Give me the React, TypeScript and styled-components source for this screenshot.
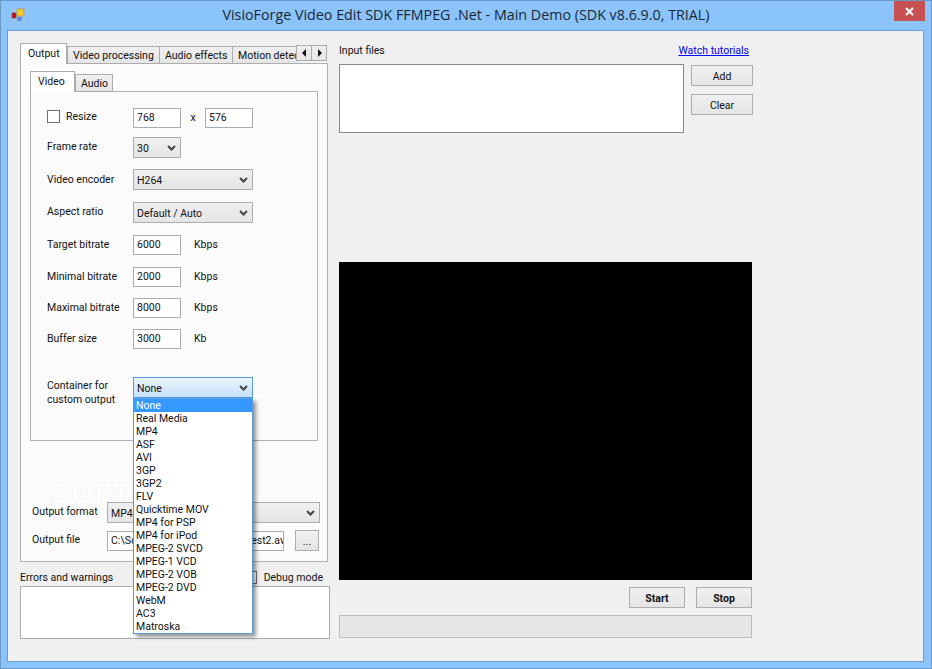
import React from 'react';
import styled, { createGlobalStyle } from 'styled-components';

const Global = createGlobalStyle`
  html, body { margin: 0; padding: 0; background: #8ac4fa; overflow: hidden; }
  * { box-sizing: border-box; }
`;

const Window = styled.div`
  width: 932px; height: 669px; background: #8ac4fa; border: 1px solid #6d98c6;
  display: flex; flex-direction: column; overflow: hidden;
  font: 10.5px Roboto, "Liberation Sans", sans-serif; color: #111;
`;
const TitleBar = styled.div`
  height: 29px; flex: none; display: grid; grid-template-columns: 1fr auto 1fr; align-items: start;
`;
const AppIcon = styled.svg` display: block; margin: 7px 0 0 10px; `;
const Title = styled.div`
  font: 14.3px "Open Sans", sans-serif; color: #1c2733; line-height: 28px; white-space: nowrap;
`;
const CloseButton = styled.div`
  justify-self: end; width: 31px; height: 20px; margin-right: 6px; background: #c75050;
  display: flex; align-items: center; justify-content: center;
`;
const Client = styled.div`
  margin: 0 7px 0 6px; height: 632px; flex: none; background: #f0f0f0; border: 1px solid #6b9ccf;
  padding: 12px 0 0 12px; display: flex; gap: 9px; align-items: flex-start;
`;
const LeftColumn = styled.div` width: 310px; flex: none; display: flex; flex-direction: column; `;
const RightColumn = styled.div` width: 414px; flex: none; display: flex; flex-direction: column; `;

const TabStrip = styled.div<{ $h: number }>`
  display: flex; align-items: flex-end; height: ${p => p.$h}px; position: relative; z-index: 2; flex: none;
`;
const TabsClip = styled.div` display: flex; align-items: flex-end; height: 100%; width: 277px; overflow: hidden; flex: none; `;
const Tab = styled.div<{ $w: number; $active?: boolean; $h?: number }>`
  width: ${p => p.$w}px; flex: none; height: ${p => p.$h ?? 18}px; white-space: nowrap; overflow: hidden;
  border: 1px solid #acacac; margin-right: -1px;
  background: ${p => (p.$active ? '#fff' : 'linear-gradient(#f0f0f0, #e5e5e5)')};
  ${p => (p.$active ? 'border-bottom: none; position: relative; z-index: 1; margin-right: 0;' : '')}
  padding: ${p => (p.$active ? '2px 0 0 7px' : '1px 0 0 5px')};
  line-height: 15px;
`;
const Scroller = styled.div`
  display: flex; align-self: flex-start; margin-top: 2px; margin-left: -1px; flex: none;
`;
const ScrollButton = styled.div`
  width: 16px; height: 16px; margin-right: -1px; border: 1px solid #acacac;
  background: linear-gradient(#f0f0f0, #e5e5e5); display: flex; align-items: center; justify-content: center;
`;
const OuterPanel = styled.div`
  width: 308px; height: 499px; margin-top: -1px; background: #fbfbfb; border: 1px solid #b0b0b0;
  padding: 7px 0 0 9px; position: relative; flex: none;
`;
const InnerPanel = styled.div`
  width: 288px; height: 350px; margin-top: -1px; background: #fbfbfb; border: 1px solid #b0b0b0;
  padding: 15px 0 0 16px; position: relative;
`;
const Row = styled.div<{ $top?: number }>`
  display: flex; align-items: center; height: 21px; margin-top: ${p => p.$top ?? 0}px;
`;
const RowLabel = styled.div<{ $pb?: number }>`
  width: 86px; flex: none; padding-bottom: ${p => p.$pb ?? 1}px; white-space: nowrap;
`;
const ContainerLabel = styled.div`
  width: 86px; flex: none; line-height: 14px; padding-top: 10px; white-space: nowrap;
`;
const CheckLabel = styled.div`
  width: 86px; flex: none; padding-bottom: 2px; display: flex; align-items: center; gap: 6px;
`;
const Check = styled.span`
  width: 13px; height: 13px; flex: none; display: block; background: #fff; border: 1px solid #6f6f6f;
`;
const Field = styled.div<{ $w: number }>`
  width: ${p => p.$w}px; height: 20px; flex: none; background: #fff; border: 1px solid #ababab;
  padding-left: 3px; line-height: 17px; white-space: nowrap; overflow: hidden;
`;
const Unit = styled.span` margin-left: 13px; padding-bottom: 1px; `;
const Times = styled.span` width: 24px; text-align: center; `;
const Combo = styled.div<{ $w: number; $focus?: boolean }>`
  width: ${p => p.$w}px; height: 21px; flex: none; position: relative;
  border: 1px solid ${p => (p.$focus ? '#569de5' : '#acacac')};
  background: ${p => (p.$focus ? 'linear-gradient(#ebf4fc, #c4e0fa)' : 'linear-gradient(#f0f0f0, #e5e5e5)')};
  padding: 1px 0 0 3px; line-height: 19px; display: flex; justify-content: space-between; align-items: center;
`;
const Chevron = styled.svg` margin-right: 4px; flex: none; `;
const DropList = styled.div`
  position: absolute; top: 20px; left: -1px; width: 120px; height: 236px; background: #fff;
  border: 1px solid #5b9bd8; box-shadow: 3px 3px 4px rgba(0,0,0,.42); z-index: 5;
`;
const DropItem = styled.div<{ $selected?: boolean }>`
  height: 13px; line-height: 13px; padding-left: 2px; white-space: nowrap;
  background: ${p => (p.$selected ? '#3399ff' : 'transparent')};
  color: ${p => (p.$selected ? '#fff' : '#111')};
`;
const OutputRows = styled.div` margin: 61px 0 0 2px; display: flex; flex-direction: column; `;
const OutputLabel = styled.div` width: 75px; flex: none; padding-bottom: 2px; white-space: nowrap; `;
const Button = styled.div<{ $w: number; $bold?: boolean }>`
  width: ${p => p.$w}px; height: 21px; flex: none; border: 1px solid #adadad;
  background: linear-gradient(#f0f0f0, #e5e5e5); text-align: center; line-height: 21px;
  font-weight: ${p => (p.$bold ? 700 : 400)};
`;
const BrowseButton = styled(Button)` margin-left: 11px; `;
const Watermark = styled.div`
  position: absolute; left: 31px; top: 414px; white-space: nowrap;
  font: 700 28px "Liberation Sans", sans-serif; letter-spacing: 1px;
  color: #fff; text-shadow: 0 0 1px #dcdcdc;
`;
const ErrorsHeader = styled.div`
  display: flex; justify-content: space-between; align-items: center; height: 16px; margin-top: 7px; padding-right: 7px;
`;
const DebugGroup = styled.div` display: flex; align-items: center; gap: 7px; `;
const ErrorsBox = styled.div` height: 53px; margin-top: 1px; background: #fff; border: 1px solid #adadad; `;
const FilesHeader = styled.div`
  display: flex; justify-content: space-between; width: 410px; height: 21px; padding-top: 1px;
`;
const TutorialLink = styled.a` color: #0000ff; text-decoration: underline; `;
const FilesRow = styled.div` display: flex; gap: 7px; align-items: flex-start; `;
const FilesList = styled.div` width: 345px; height: 69px; background: #fff; border: 1px solid #828790; `;
const FileButtons = styled.div` display: flex; flex-direction: column; gap: 8px; margin-top: 1px; `;
const VideoArea = styled.div` width: 413px; height: 318px; margin-top: 129px; background: #000; `;
const Controls = styled.div` display: flex; justify-content: flex-end; gap: 11px; width: 413px; margin-top: 7px; `;
const Progress = styled.div` width: 413px; height: 23px; margin-top: 7px; background: #e6e6e6; border: 1px solid #bcbcbc; `;

const down = (
  <Chevron width="9" height="6" viewBox="0 0 9 6">
    <path d="M1 1l3.5 3.5L8 1" fill="none" stroke="#444" strokeWidth="2" />
  </Chevron>
);

const containers = ['None','Real Media','MP4','ASF','AVI','3GP','3GP2','FLV','Quicktime MOV','MP4 for PSP','MP4 for iPod','MPEG-2 SVCD','MPEG-1 VCD','MPEG-2 VOB','MPEG-2 DVD','WebM','AC3','Matroska'];

export default function App() {
  return (
    <>
      <Global />
      <Window>
        <TitleBar>
          <AppIcon width="15" height="15" viewBox="0 0 15 15">
            <rect x="0.5" y="0.5" width="14" height="14" fill="#a9c3dc" opacity=".5" />
            <rect x="1" y="5" width="4" height="5" fill="#c0141a" stroke="#8a3030" strokeWidth=".6" />
            <rect x="6" y="1" width="7" height="7" fill="#f6c92e" stroke="#b08c20" strokeWidth=".6" />
            <rect x="6" y="9" width="5" height="4" fill="#5a8fe0" />
          </AppIcon>
          <Title>VisioForge Video Edit SDK FFMPEG .Net - Main Demo (SDK v8.6.9.0, TRIAL)</Title>
          <CloseButton>
            <svg width="9" height="9" viewBox="0 0 9 9"><path d="M1 1l7 7M8 1L1 8" stroke="#fff" strokeWidth="2" /></svg>
          </CloseButton>
        </TitleBar>
        <Client>
          <LeftColumn>
            <TabStrip $h={21}>
              <TabsClip>
                <Tab $active $w={47} $h={21}>Output</Tab>
                <Tab $w={93}>Video processing</Tab>
                <Tab $w={74}>Audio effects</Tab>
                <Tab $w={90}>Motion detection</Tab>
              </TabsClip>
              <Scroller>
                <ScrollButton>
                  <svg width="5" height="8" viewBox="0 0 5 8"><path d="M4 0v8L0 4z" fill="#111" /></svg>
                </ScrollButton>
                <ScrollButton>
                  <svg width="5" height="8" viewBox="0 0 5 8"><path d="M1 0v8l4-4z" fill="#111" /></svg>
                </ScrollButton>
              </Scroller>
            </TabStrip>
            <OuterPanel>
              <Watermark>SOFTPEDIA®</Watermark>
              <TabStrip $h={21}>
                <Tab $active $w={45} $h={21}>Video</Tab>
                <Tab $w={38}>Audio</Tab>
              </TabStrip>
              <InnerPanel>
                <Row>
                  <CheckLabel><Check />Resize</CheckLabel>
                  <Field $w={48}>768</Field>
                  <Times>x</Times>
                  <Field $w={48}>576</Field>
                </Row>
                <Row $top={9}><RowLabel $pb={2}>Frame rate</RowLabel><Combo $w={48}>30{down}</Combo></Row>
                <Row $top={11}><RowLabel $pb={0}>Video encoder</RowLabel><Combo $w={120}>H264{down}</Combo></Row>
                <Row $top={12}><RowLabel $pb={2}>Aspect ratio</RowLabel><Combo $w={120}>Default / Auto{down}</Combo></Row>
                <Row $top={11}><RowLabel>Target bitrate</RowLabel><Field $w={48}>6000</Field><Unit>Kbps</Unit></Row>
                <Row $top={11}><RowLabel>Minimal bitrate</RowLabel><Field $w={48}>2000</Field><Unit>Kbps</Unit></Row>
                <Row $top={10}><RowLabel>Maximal bitrate</RowLabel><Field $w={48}>8000</Field><Unit>Kbps</Unit></Row>
                <Row $top={10}><RowLabel>Buffer size</RowLabel><Field $w={48}>3000</Field><Unit>Kb</Unit></Row>
                <Row $top={28}>
                  <ContainerLabel>Container for<br />custom output</ContainerLabel>
                  <Combo $w={120} $focus>
                    None{down}
                    <DropList>
                      {containers.map((c, i) => <DropItem key={c} $selected={i === 0}>{c}</DropItem>)}
                    </DropList>
                  </Combo>
                </Row>
              </InnerPanel>
              <OutputRows>
                <Row>
                  <OutputLabel>Output format</OutputLabel>
                  <Combo $w={213}>MP4{down}</Combo>
                </Row>
                <Row $top={7}>
                  <OutputLabel>Output file</OutputLabel>
                  <Field $w={177}>C:\Softpedia\Softpedia Files\test2.avi</Field>
                  <BrowseButton $w={24}>...</BrowseButton>
                </Row>
              </OutputRows>
            </OuterPanel>
            <ErrorsHeader>
              <span>Errors and warnings</span>
              <DebugGroup><Check />Debug mode</DebugGroup>
            </ErrorsHeader>
            <ErrorsBox />
          </LeftColumn>
          <RightColumn>
            <FilesHeader>
              <span>Input files</span>
              <TutorialLink>Watch tutorials</TutorialLink>
            </FilesHeader>
            <FilesRow>
              <FilesList />
              <FileButtons>
                <Button $w={62}>Add</Button>
                <Button $w={62}>Clear</Button>
              </FileButtons>
            </FilesRow>
            <VideoArea />
            <Controls>
              <Button $w={56} $bold>Start</Button>
              <Button $w={56} $bold>Stop</Button>
            </Controls>
            <Progress />
          </RightColumn>
        </Client>
      </Window>
    </>
  );
}
